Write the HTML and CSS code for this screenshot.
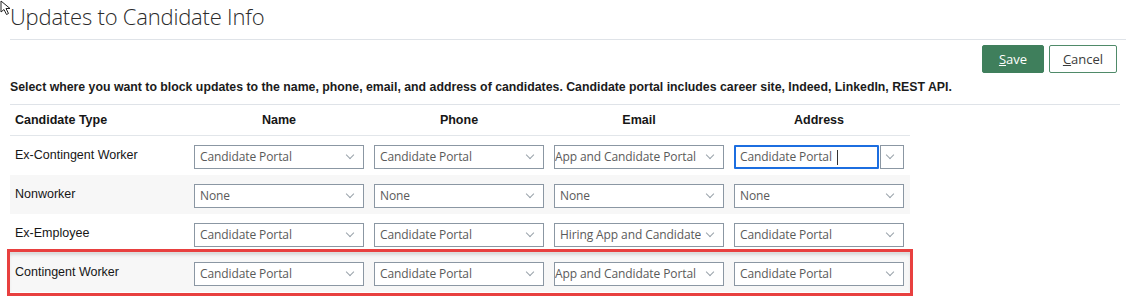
FILE: index.html
```html
<!DOCTYPE html>
<html>
<head>
    <title>Updates to Candidate Info</title>
    <meta name="viewport" content="width=device-width, initial-scale=1">
    <link rel="stylesheet" href="styles.css">
</head>
<body>
    <svg class="mouse-cursor" width="14" height="16" viewBox="0 0 14 16">
        <path d="M1 1 L1 12 L4 9.5 L6.5 14.5 L8.5 13.5 L6 8.5 L10 8.5 Z" fill="#fff" stroke="#222" stroke-width="1"/>
    </svg>
    <div class="page-header">
        <h1>Updates to Candidate Info</h1>
    </div>
    <div class="page-body">
        <div class="toolbar">
            <button class="btn btn-primary"><u>S</u>ave</button>
            <button class="btn btn-secondary"><u>C</u>ancel</button>
        </div>
        <p class="instructions">Select where you want to block updates to the name, phone, email, and address of candidates. Candidate portal includes career site, Indeed, LinkedIn, REST API.</p>
        <div class="block-table">
            <div class="table-head">
                <div class="cell label">Candidate Type</div>
                <div class="cell">Name</div>
                <div class="cell">Phone</div>
                <div class="cell">Email</div>
                <div class="cell">Address</div>
            </div>

            <div class="table-row">
                <div class="cell label">Ex-Contingent Worker</div>
                <div class="cell"><div class="select"><span class="value">Candidate Portal</span><span class="chevron"></span></div></div>
                <div class="cell"><div class="select"><span class="value">Candidate Portal</span><span class="chevron"></span></div></div>
                <div class="cell"><div class="select scrolled"><span class="value">App and Candidate Portal</span><span class="chevron"></span></div></div>
                <div class="cell">
                    <div class="select active">
                        <span class="value"><span>Candidate Portal</span><span class="caret"></span></span>
                        <span class="chevron"></span>
                    </div>
                </div>
            </div>

            <div class="table-row shaded">
                <div class="cell label">Nonworker</div>
                <div class="cell"><div class="select"><span class="value">None</span><span class="chevron"></span></div></div>
                <div class="cell"><div class="select"><span class="value">None</span><span class="chevron"></span></div></div>
                <div class="cell"><div class="select"><span class="value">None</span><span class="chevron"></span></div></div>
                <div class="cell"><div class="select"><span class="value">None</span><span class="chevron"></span></div></div>
            </div>

            <div class="table-row">
                <div class="cell label">Ex-Employee</div>
                <div class="cell"><div class="select"><span class="value">Candidate Portal</span><span class="chevron"></span></div></div>
                <div class="cell"><div class="select"><span class="value">Candidate Portal</span><span class="chevron"></span></div></div>
                <div class="cell"><div class="select"><span class="value">Hiring App and Candidate Portal</span><span class="chevron"></span></div></div>
                <div class="cell"><div class="select"><span class="value">Candidate Portal</span><span class="chevron"></span></div></div>
            </div>

            <div class="table-row shaded marked">
                <div class="cell label">Contingent Worker</div>
                <div class="cell"><div class="select"><span class="value">Candidate Portal</span><span class="chevron"></span></div></div>
                <div class="cell"><div class="select"><span class="value">Candidate Portal</span><span class="chevron"></span></div></div>
                <div class="cell"><div class="select scrolled"><span class="value">App and Candidate Portal</span><span class="chevron"></span></div></div>
                <div class="cell"><div class="select"><span class="value">Candidate Portal</span><span class="chevron"></span></div></div>
            </div>
        </div>
    </div>
</body>
</html>
```

FILE: styles.css
```css
body {
    margin: 0;
    background: #fff;
    font-family: 'Liberation Sans', Arial, sans-serif;
    color: #161616;
    overflow: hidden;
}

.mouse-cursor {
    position: absolute;
    top: 0;
    left: 0;
    z-index: 10;
}

.page-header {
    margin-left: 10px;
    height: 39px;
    border-bottom: 1px solid #dfe3e8;
    box-sizing: content-box;
}

.page-header h1 {
    margin: 0;
    padding-top: 1px;
    font-family: 'Open Sans', sans-serif;
    font-weight: 300;
    font-size: 22px;
    line-height: 30px;
    color: #2b2b2b;
    letter-spacing: -0.2px;
}

.page-body {
    padding: 0 6px 4px 10px;
}

.toolbar {
    display: flex;
    justify-content: flex-end;
    gap: 5px;
    padding: 5px 3px 0 0;
}

.btn {
    height: 28px;
    padding: 0;
    font-family: 'Open Sans', sans-serif;
    font-size: 13px;
    border-radius: 2px;
    cursor: pointer;
}

.btn-primary {
    width: 62px;
    background: #3f7f5c;
    border: 1px solid #3f7f5c;
    color: #fff;
}

.btn-secondary {
    width: 68px;
    background: #fff;
    border: 1px solid #4f8a69;
    color: #3b3b3b;
}

.instructions {
    margin: 4px 0 0;
    padding-bottom: 7px;
    font-size: 12.3px;
    font-weight: 700;
    line-height: 20px;
    color: #1b1b1b;
    border-bottom: 1px solid #dfe3e8;
    white-space: nowrap;
}

.block-table {
    width: 900px;
}

.table-head,
.table-row {
    display: grid;
    grid-template-columns: 180px repeat(4, 180px);
    align-items: center;
}

.table-head {
    height: 30px;
    border-bottom: 1px solid #e2e6ea;
    font-size: 12.5px;
    font-weight: 700;
}

.table-head .cell {
    text-align: center;
    padding-right: 2px;
}

.table-head .cell.label {
    text-align: left;
    padding-left: 5px;
}

.table-row {
    height: 39px;
    font-size: 12.5px;
}

.table-row.shaded {
    background: #f7f7f7;
}

.table-row .cell.label {
    padding-left: 5px;
    padding-bottom: 4px;
}

.table-row .cell {
    padding-left: 4px;
    padding-top: 3px;
}

.table-row.marked {
    position: relative;
}

.table-row.marked::after {
    content: "";
    position: absolute;
    top: -4px;
    bottom: -4px;
    left: -3px;
    right: -3px;
    border: 3px solid #e8403f;
    box-shadow: inset 0 4px 4px -2px rgba(0, 0, 0, 0.18);
    pointer-events: none;
}

.select {
    display: flex;
    width: 170px;
    height: 24px;
    box-sizing: border-box;
    border: 1px solid #8b97a3;
    background: #fff;
    font-family: 'Open Sans', sans-serif;
    font-size: 12px;
    letter-spacing: -0.1px;
    color: #5a5a5a;
}

.select .value {
    flex: 1;
    min-width: 0;
    padding-left: 5px;
    line-height: 22px;
    white-space: nowrap;
    overflow: hidden;
}

.select.scrolled .value {
    padding-left: 0;
}

.select .chevron {
    flex: 0 0 22px;
    position: relative;
}

.select .chevron::before {
    content: "";
    position: absolute;
    top: 6px;
    left: 6px;
    width: 5px;
    height: 5px;
    border-right: 1px solid #9aa3ab;
    border-bottom: 1px solid #9aa3ab;
    transform: rotate(45deg);
}

.select.active {
    border: none;
    gap: 1px;
}

.select.active .value {
    border: 2px solid #1c6ee0;
    border-radius: 1px;
    line-height: 20px;
    padding-left: 4px;
    display: flex;
    align-items: center;
}

.select.active .caret {
    display: inline-block;
    width: 1px;
    height: 15px;
    margin-left: 5px;
    background: #333;
}

.select.active .chevron {
    border: 1px solid #8b97a3;
}
```
